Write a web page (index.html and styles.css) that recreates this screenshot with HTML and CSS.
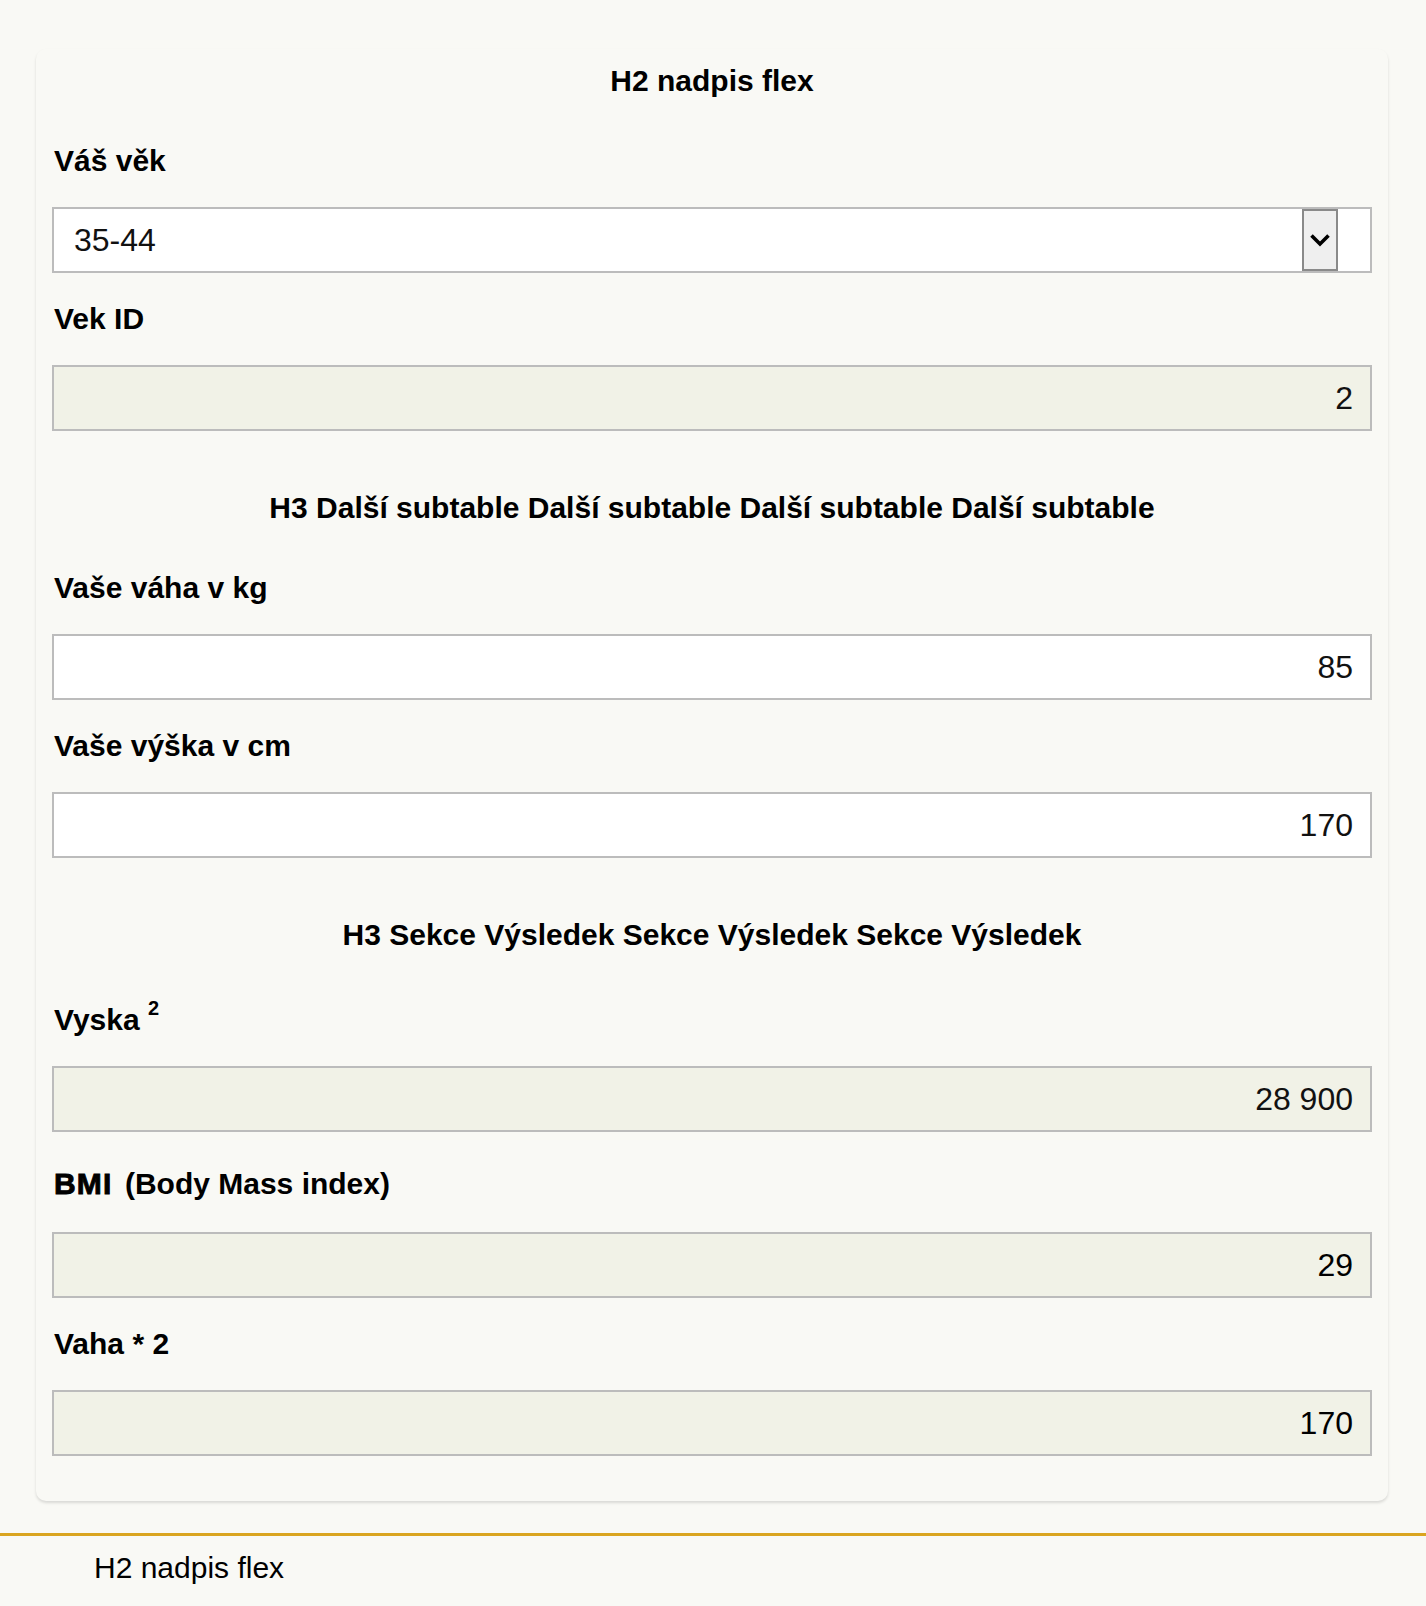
FILE: index.html
```html
<!DOCTYPE html>
<html lang="cs">
<head>
<meta charset="utf-8">
<title>BMI</title>
<link rel="stylesheet" href="styles.css">
</head>
<body>
<main class="page">
  <form class="card">
    <h2 class="card-title">H2 nadpis flex</h2>

    <div class="field">
      <label class="field-label">Váš věk</label>
      <div class="select">
        <span class="select-value">35-44</span>
        <span class="select-button">
          <svg width="22" height="14" viewBox="0 0 22 14"><path d="M2.5 2.5 L11 11 L19.5 2.5" fill="none" stroke="#000" stroke-width="3.6"/></svg>
        </span>
      </div>
    </div>

    <div class="field">
      <label class="field-label">Vek ID</label>
      <input class="input input-readonly" type="text" value="2" readonly>
    </div>

    <h3 class="section-title">H3 Další subtable Další subtable Další subtable Další subtable</h3>

    <div class="field">
      <label class="field-label">Vaše váha v kg</label>
      <input class="input" type="text" value="85">
    </div>

    <div class="field">
      <label class="field-label">Vaše výška v cm</label>
      <input class="input" type="text" value="170">
    </div>

    <h3 class="section-title">H3 Sekce Výsledek Sekce Výsledek Sekce Výsledek</h3>

    <div class="field">
      <label class="field-label field-label-sup">Vyska <sup class="sup">2</sup></label>
      <input class="input input-readonly" type="text" value="28 900" readonly>
    </div>

    <div class="field">
      <label class="field-label field-label-tall"><strong class="abbr">BMI</strong> (Body Mass index)</label>
      <input class="input input-readonly input-strong" type="text" value="29" readonly>
    </div>

    <div class="field">
      <label class="field-label">Vaha * 2</label>
      <input class="input input-readonly input-strong" type="text" value="170" readonly>
    </div>
  </form>
</main>
<footer class="footer">
  <span class="footer-text">H2 nadpis flex</span>
</footer>
</body>
</html>
```

FILE: styles.css
```css
* {
  box-sizing: border-box;
}

html, body {
  margin: 0;
  padding: 0;
  background: #f9f9f5;
  color: #000;
  font-family: "Liberation Sans", Arial, sans-serif;
}

.page {
  padding: 49px 38px 0 36px;
}

.card {
  display: flex;
  flex-direction: column;
  padding: 14px 16px 45px;
  border-radius: 10px;
  background: #f9f9f5;
  box-shadow: 0 2px 3px rgba(0, 0, 0, 0.13);
}

.card-title {
  margin: 0 0 16px;
  font-size: 30px;
  line-height: 36px;
  font-weight: bold;
  text-align: center;
}

.section-title {
  margin: 59px 0 16px;
  font-size: 30px;
  line-height: 36px;
  font-weight: bold;
  text-align: center;
}

.field {
  display: flex;
  flex-direction: column;
  margin-top: 28px;
}

.field-label {
  display: block;
  margin-bottom: 28px;
  padding-left: 2px;
  font-size: 30px;
  line-height: 36px;
  font-weight: bold;
}

.field-label-sup {
  padding-top: 5px;
}

.field-label-tall {
  padding-top: 6px;
  padding-bottom: 2px;
}

.sup {
  font-size: 20px;
  line-height: 0;
  vertical-align: 15px;
}

.abbr {
  font-weight: 900;
  letter-spacing: 1.2px;
  margin-right: 4px;
  -webkit-text-stroke: 0.9px #000;
}

.input {
  display: block;
  width: 100%;
  height: 66px;
  margin: 0;
  padding: 0 17px 0 20px;
  border: 2px solid #bcbcbc;
  border-radius: 0;
  background: #fff;
  color: #111;
  font-family: "Liberation Sans", Arial, sans-serif;
  font-size: 32px;
  text-align: right;
  outline: none;
}

.input-readonly {
  background: #f1f2e7;
}

.input-strong {
  color: #000;
}

.select {
  display: flex;
  align-items: stretch;
  height: 66px;
  border: 2px solid #bcbcbc;
  background: #fff;
}

.select-value {
  flex: 1;
  display: flex;
  align-items: center;
  padding-left: 20px;
  color: #111;
  font-size: 32px;
}

.select-button {
  display: flex;
  align-items: center;
  justify-content: center;
  width: 36px;
  margin-right: 32px;
  border: 2px solid #8a8a8a;
  background: #efefef;
}

.footer {
  margin-top: 32px;
  padding: 14px 0 16px 94px;
  border-top: 3px solid #daa520;
}

.footer-text {
  display: block;
  font-size: 30px;
  line-height: 36px;
  color: #000;
}
```
